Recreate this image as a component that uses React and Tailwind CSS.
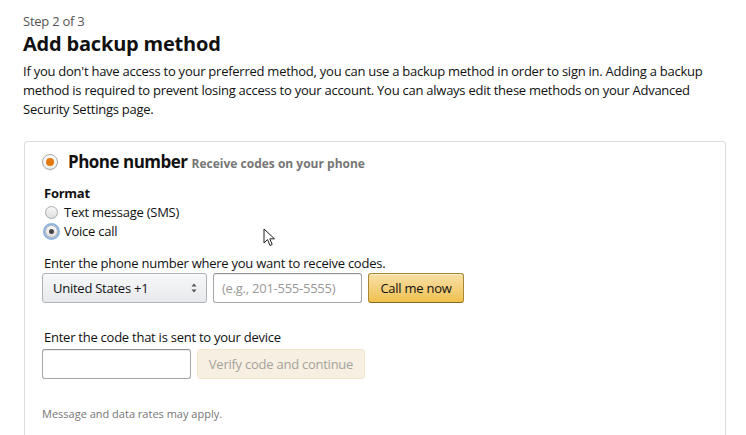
import { useState } from 'react';

const font = { fontFamily: '"Open Sans", "Noto Sans", Arial, sans-serif' };

function Radio({ checked, orange, focused }) {
  if (orange) {
    return (
      <span className="flex h-[16px] w-[16px] items-center justify-center rounded-full border border-[#a6a6a6] bg-gradient-to-b from-white to-[#eee] shadow-[0_1px_0_rgba(0,0,0,0.05)]">
        <span className="h-[8px] w-[8px] rounded-full bg-[#e47911]" />
      </span>
    );
  }
  return (
    <span
      className={
        'flex h-[13px] w-[13px] items-center justify-center rounded-full border border-[#aaa] bg-gradient-to-b from-[#fafafa] to-[#ddd] ' +
        (focused ? 'outline outline-2 outline-[#8fb3e0]' : '')
      }
    >
      {checked && <span className="h-[5px] w-[5px] rounded-full bg-[#444]" />}
    </span>
  );
}

export default function App() {
  const [format, setFormat] = useState('voice');

  return (
    <div className="min-h-screen bg-white text-[13px] leading-[19px] tracking-[-0.25px] text-[#111]" style={font}>
      <div className="pl-[23px] pr-[20px] pt-[12px]">
        <div className="text-[#555]">Step 2 of 3</div>
        <h1 className="-mt-[1px] text-[20px] font-bold leading-[28px] tracking-[-0.2px] text-[#111]">Add backup method</h1>
        <p className="mt-[4px] pr-[14px]">
          If you don't have access to your preferred method, you can use a backup method in order to sign in.
          Adding a backup method is required to prevent losing access to your account. You can always edit these
          methods on your Advanced Security Settings page.
        </p>

        <div className="mt-[22px] ml-[1px] w-[702px] rounded-t-[4px] border border-b-0 border-[#ddd] pb-[20px] pl-[17px] pt-[9px]">
          <div className="flex items-center gap-[10px]">
            <Radio orange />
            <span className="text-[17px] font-bold leading-[22px] tracking-[-0.5px]">Phone number</span>
            <span className="-ml-[6px] mt-[2px] text-[12px] font-bold tracking-[0px] text-[#767676]">Receive codes on your phone</span>
          </div>

          <div className="ml-[2px] mt-[11px] font-bold">Format</div>
          <label className="ml-[3px] flex items-center gap-[6px]" onClick={() => setFormat('sms')}>
            <Radio checked={format === 'sms'} />
            <span>Text message (SMS)</span>
          </label>
          <label className="ml-[3px] flex items-center gap-[6px]" onClick={() => setFormat('voice')}>
            <Radio checked={format === 'voice'} focused />
            <span>Voice call</span>
          </label>

          <div className="ml-[2px] mt-[13px]">Enter the phone number where you want to receive codes.</div>
          <div className="flex gap-[6px]">
            <div className="flex h-[30px] w-[165px] items-center justify-between rounded-[3px] border border-[#adb1b8] bg-gradient-to-b from-[#f7f8fa] to-[#e7e9ec] pl-[10px] pr-[9px] shadow-[0_1px_0_rgba(255,255,255,0.6)_inset]">
              <span>United States +1</span>
              <svg width="6" height="10" viewBox="0 0 6 10">
                <path d="M3 0.5 L5.5 3.5 H0.5 Z M3 9.5 L5.5 6.5 H0.5 Z" fill="#555" />
              </svg>
            </div>
            <input
              className="h-[30px] w-[149px] rounded-[3px] border border-[#a6a6a6] border-t-[#949494] px-[8px] text-[13px] outline-none placeholder:text-[#999] shadow-[0_1px_0_rgba(255,255,255,0.5),0_1px_0_rgba(0,0,0,0.07)_inset]"
              placeholder="(e.g., 201-555-5555)"
            />
            <button className="h-[30px] w-[96px] rounded-[3px] border border-[#a88734] border-b-[#846a29] bg-gradient-to-b from-[#f7dfa5] to-[#f0c14b] text-[13px] text-[#111] shadow-[0_1px_0_rgba(255,255,255,0.4)_inset]">
              Call me now
            </button>
          </div>

          <div className="ml-[2px] mt-[25px]">Enter the code that is sent to your device</div>
          <div className="mt-[2px] flex gap-[6px]">
            <input className="h-[30px] w-[149px] rounded-[3px] border border-[#a6a6a6] border-t-[#949494] px-[8px] outline-none shadow-[0_1px_0_rgba(0,0,0,0.07)_inset]" />
            <button className="h-[30px] w-[168px] rounded-[3px] border border-[#f2e6cc] bg-[#f7f0e2] text-[13px] text-[#a5a29c]" disabled>
              Verify code and continue
            </button>
          </div>

          <div className="mt-[25px] text-[11px] tracking-[0px] text-[#767676]">Message and data rates may apply.</div>
        </div>
      </div>

      <svg className="pointer-events-none absolute left-[263px] top-[228px]" width="13" height="20" viewBox="0 0 13 20">
        <path d="M1 1 L1 15 L4.5 11.5 L7 17.5 L9.2 16.5 L6.8 10.8 L11.5 10.8 Z" fill="white" stroke="#222" strokeWidth="1" strokeLinejoin="round" />
      </svg>
    </div>
  );
}
